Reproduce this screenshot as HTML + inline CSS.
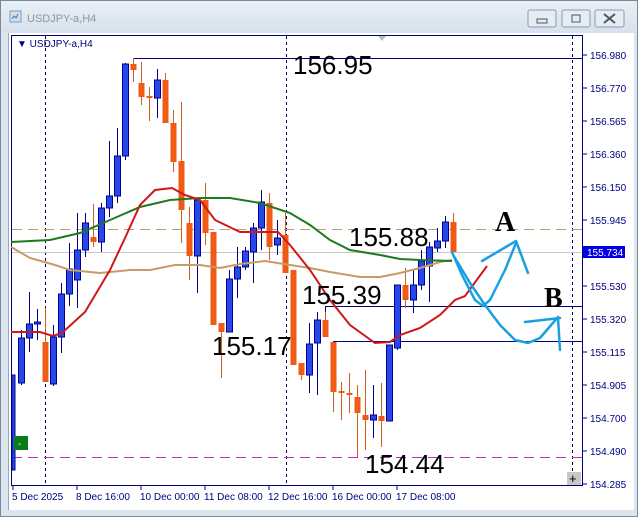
<!DOCTYPE html>
<html><head><meta charset="utf-8"><style>
html,body{margin:0;padding:0;background:#dfe8f1;}
body{width:638px;height:517px;overflow:hidden;position:relative;font-family:"Liberation Sans",sans-serif;}
</style></head><body>
<svg width="638" height="517" xmlns="http://www.w3.org/2000/svg" style="position:absolute;left:0;top:0">
<defs><linearGradient id="tb" x1="0" y1="0" x2="0" y2="1"><stop offset="0" stop-color="#e9eff6"/><stop offset="1" stop-color="#d6e1ec"/></linearGradient></defs>
<rect x="0" y="0" width="638" height="517" fill="#dbe5ef"/>
<rect x="0.5" y="0.5" width="637" height="516" fill="none" stroke="#7b8a9a"/>
<rect x="1" y="1" width="636" height="32" fill="url(#tb)"/>
<rect x="10" y="11" width="11" height="11" fill="#cfe0ef" stroke="#7f9cb8"/>
<path d="M12 19 l2-3 2 2 2-4" stroke="#4a78a8" fill="none"/>
<text x="27" y="22" font-size="11" fill="#8a96a3">USDJPY-a,H4</text>
<g fill="#e4ecf4" stroke="#8b9aab"><rect x="528" y="10" width="28" height="17" rx="2"/><rect x="562" y="10" width="28" height="17" rx="2"/><rect x="595" y="10" width="29" height="17" rx="2"/></g>
<rect x="537" y="19" width="10" height="4" fill="none" stroke="#555"/>
<rect x="572" y="15" width="8" height="7" fill="none" stroke="#555"/>
<path d="M604 14 l11 9 M615 14 l-11 9" stroke="#555" stroke-width="2"/>
<rect x="8" y="33" width="626" height="477" fill="#fff"/>
<rect x="8" y="33" width="1" height="477" fill="#9aa"/>
<rect x="11.5" y="35.5" width="571" height="450" fill="#fff" stroke="#000080"/>
<g stroke="#000050" stroke-dasharray="3,3" stroke-width="1"><line x1="45.5" y1="36" x2="45.5" y2="485"/><line x1="286.5" y1="36" x2="286.5" y2="485"/><line x1="572.5" y1="36" x2="572.5" y2="485"/></g>
<path d="M378 36 l8 0 -4 5z" fill="#b8bcc8"/>
<line x1="12" y1="229.5" x2="582" y2="229.5" stroke="#c59a6a" stroke-dasharray="10,6"/>
<line x1="12" y1="252.5" x2="582" y2="252.5" stroke="#c8c8c8"/>
<line x1="12" y1="457.5" x2="582" y2="457.5" stroke="#d020c0" stroke-dasharray="10,6"/>
<g stroke="#000080"><line x1="133" y1="58.5" x2="582" y2="58.5"/><line x1="133.5" y1="58" x2="133.5" y2="64"/><line x1="325" y1="306.5" x2="582" y2="306.5"/><line x1="325.5" y1="306" x2="325.5" y2="318"/><line x1="333" y1="341.5" x2="582" y2="341.5"/><line x1="333.5" y1="341" x2="333.5" y2="345"/></g>
<g id="c"></g>
<polyline fill="none" stroke="#c89a68" stroke-width="2" points="11,247 30,258 55,265 70,270 100,273 130,270 150,270 175,265 200,265 220,268 240,264 265,261 290,265 310,268 330,272 360,277 380,277 400,273 420,268 440,262 452,260"/>
<polyline fill="none" stroke="#1e7a1e" stroke-width="2" points="11,242 50,240 80,233 110,220 140,207 170,200 200,198 230,198 260,203 290,213 310,225 330,240 350,250 380,255 400,259 420,260 452,261"/>
<polyline fill="none" stroke="#d01818" stroke-width="2" points="11,332 40,332 53,336 62,333 85,312 110,270 125,238 140,205 155,190 172,188 185,195 200,200 215,220 240,232 260,232 278,232 290,245 310,270 330,300 350,325 375,343 390,342 400,335 420,328 440,315 455,300 465,296 487,266"/>
<g fill="none" stroke="#1aa0e0" stroke-width="2.5" stroke-linecap="round" stroke-linejoin="round">
<path d="M452 252 L462 275 L475 300 L483 306 L490 300 L505 270 L516 243"/>
<path d="M482 261 L516 241 L528 273"/>
<path d="M455 258 L470 283 L485 305 L500 325 L515 340 L528 343 L540 338 L558 317"/>
<path d="M525 322 L560 318 M558 318 L560 350"/>
</g>
<g font-size="26" fill="#000"><text x="293" y="74">156.95</text><text x="349" y="246">155.88</text><text x="302" y="304">155.39</text><text x="212" y="355">155.17</text><text x="365" y="473">154.44</text></g>
<g font-family="Liberation Serif,serif" font-weight="bold" font-size="28" fill="#000"><text x="495" y="231">A</text><text x="544" y="307">B</text></g>
<text x="17" y="47" font-size="10" fill="#000080">▼ USDJPY-a,H4</text>
<rect x="14" y="436" width="14" height="14" fill="#0a7a1a"/><text x="18" y="447" font-size="10" fill="#fff">-</text>
<rect x="567" y="472" width="14" height="13" fill="#c8c8c8"/><text x="569" y="483" font-size="13" fill="#000">+</text>
<g font-size="10" fill="#000080">
<text x="590" y="59">156.980</text><text x="590" y="92">156.770</text><text x="590" y="125">156.565</text><text x="590" y="158">156.360</text><text x="590" y="191">156.150</text><text x="590" y="224">155.945</text><text x="590" y="290">155.530</text><text x="590" y="323">155.320</text><text x="590" y="356">155.115</text><text x="590" y="389">154.905</text><text x="590" y="422">154.700</text><text x="590" y="455">154.490</text><text x="590" y="488">154.285</text>
<text x="12" y="500">5 Dec 2025</text><text x="76" y="500">8 Dec 16:00</text><text x="140" y="500">10 Dec 00:00</text><text x="204" y="500">11 Dec 08:00</text><text x="268" y="500">12 Dec 16:00</text><text x="332" y="500">16 Dec 00:00</text><text x="396" y="500">17 Dec 08:00</text>
</g>
<g stroke="#000080"><path d="M583 55h4M583 88h4M583 121h4M583 154h4M583 187h4M583 220h4M583 286h4M583 319h4M583 352h4M583 385h4M583 418h4M583 451h4M583 484h4"/><path d="M13 486v4M77 486v4M141 486v4M205 486v4M269 486v4M333 486v4M397 486v4"/></g>
<rect x="583" y="246" width="42" height="12" fill="#0000e0"/>
<text x="587" y="256" font-size="10" fill="#fff">155.734</text>
</svg>
<script>
var d=[
[13,'b',375,470,375,470],[21,'b',338,383,330,385],[29,'b',324,338,292,352],[37,'b',322,324,309,340],[45,'o',342,382,308,382],[53,'b',337,384,325,386],[61,'b',294,337,283,353],[69,'b',269,294,243,306],
[77,'b',250,280,213,308],[85,'b',223,250,213,257],[93,'o',237,242,204,247],[101,'b',208,242,203,252],[109,'b',196,208,141,217],[117,'b',156,196,128,203],[125,'b',64,156,63,160],[133,'o',64,70,58,82],
[141,'o',83,97,62,105],[149,'o',96,98,87,121],[157,'b',80,98,69,118],[165,'o',80,123,73,123],[173,'o',123,162,110,172],[181,'o',161,210,102,243],[189,'o',223,256,207,280],[197,'b',200,256,200,293],
[205,'o',200,233,183,245],[213,'o',232,325,232,325],[221,'o',323,332,323,378],[229,'b',279,332,270,332],[237,'b',267,279,247,298],[245,'b',251,267,247,270],[253,'b',228,252,223,283],[261,'b',202,228,190,250],
[269,'o',203,247,193,260],[277,'b',238,245,220,255],[285,'o',235,273,213,273],[293,'o',270,365,270,365],[301,'o',363,375,363,380],[309,'b',344,375,323,393],[317,'b',320,343,312,395],[325,'o',320,337,312,337],
[333,'o',342,392,342,412],[341,'o',391,393,382,420],[349,'o',393,395,373,413],[357,'o',397,413,385,457],[365,'o',415,420,370,450],[373,'b',415,420,385,438],[381,'o',416,421,383,447],[389,'b',345,421,345,421],
[397,'b',285,348,285,350],[405,'o',285,300,268,308],[413,'b',285,300,270,313],[421,'b',261,285,250,290],[429,'b',247,266,242,302],[437,'b',241,248,228,252],[445,'b',222,241,216,248],[453,'o',222,252,213,252]];
var s='';d.forEach(function(c,i){var col=c[1]=='b'?'#2848e8':'#f05a14';var wc=c[1]=='b'?'#000090':'#d06020';
s+='<line x1="'+(c[0]+.5)+'" y1="'+c[4]+'" x2="'+(c[0]+.5)+'" y2="'+c[5]+'" stroke="'+wc+'"/>';
var h=Math.max(2,c[3]-c[2]);var x=i==0?12:c[0]-2.5,w=i==0?3:6;s+='<rect x="'+x+'" y="'+c[2]+'" width="'+w+'" height="'+h+'" fill="'+col+'"'+(c[1]=='b'?' stroke="#000090" stroke-width="1"':'')+'/>';});
document.getElementById('c').innerHTML=s;
</script>
</body></html>
